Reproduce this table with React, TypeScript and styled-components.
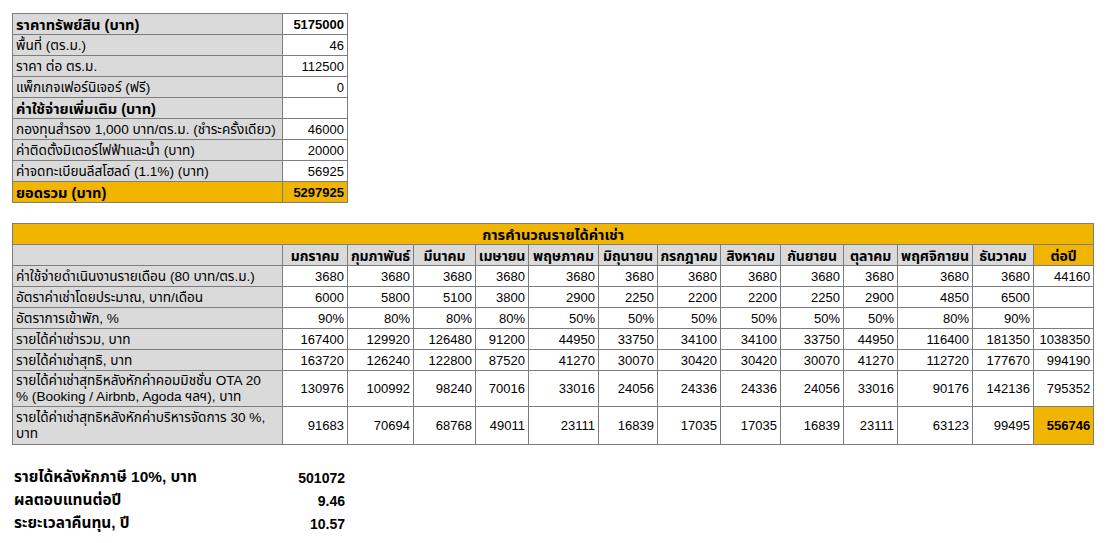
import React from "react";
import styled, { createGlobalStyle } from "styled-components";

const GlobalStyle = createGlobalStyle`
  html, body { margin: 0; padding: 0; background: #ffffff; }
  body {
    font-family: "Liberation Sans", Tahoma, "Noto Sans Thai", "Noto Sans", sans-serif;
    color: #000;
  }
`;

const GRAY = "#dadada";
const ORANGE = "#f1b500";
const LINE = "#7d7d7d";

const Page = styled.div`
  display: flex;
  flex-direction: column;
  padding: 13px 0 0 12px;
  width: 1109px;
  height: 543px;
  box-sizing: border-box;
`;

const Table = styled.table<{ $w: number }>`
  border-collapse: collapse;
  table-layout: fixed;
  width: ${(p) => p.$w}px;
  font-size: 13px;
  line-height: 16px;
`;

const Row = styled.tr<{ $h?: number }>`
  height: ${(p) => p.$h ?? 21}px;
`;

type Tone = "label" | "value" | "head" | "accent";

const Cell = styled.td<{
  $tone: Tone;
  $bold?: boolean;
  $align?: "left" | "right" | "center";
  $size?: number;
}>`
  border: 1px solid ${LINE};
  padding: 1px 3px 0 3px;
  box-sizing: border-box;
  white-space: nowrap;
  vertical-align: middle;
  font-size: ${(p) => p.$size ?? 13}px;
  font-weight: ${(p) => (p.$bold ? 700 : 400)};
  text-align: ${(p) => p.$align ?? (p.$tone === "label" ? "left" : "right")};
  background: ${(p) =>
    p.$tone === "label" || p.$tone === "head" ? GRAY : p.$tone === "accent" ? ORANGE : "#ffffff"};
`;

const HeadCell = styled(Cell)`
  padding: 1px 0 0 0;
  letter-spacing: -0.1px;
`;

const Spacer = styled.div<{ $h: number }>`
  height: ${(p) => p.$h}px;
  flex: none;
`;

const Summary = styled.div`
  display: grid;
  grid-template-columns: 1fr auto;
  grid-auto-rows: 23px;
  width: 331px;
  padding-left: 2px;
  font-weight: 700;
  align-items: center;
`;

const SumLabel = styled.span`
  font-size: 15.4px;
  white-space: nowrap;
`;

const SumValue = styled.span`
  font-size: 14px;
  text-align: right;
`;

const LABEL_SIZE = 13.6;
const BOLD_LABEL_SIZE = 14.6;
const MONTH_SIZE = 14;

const topRows: { label: string; value: string; bold?: boolean; accent?: boolean }[] = [
  { label: "ราคาทรัพย์สิน (บาท)", value: "5175000", bold: true },
  { label: "พื้นที่ (ตร.ม.)", value: "46" },
  { label: "ราคา ต่อ ตร.ม.", value: "112500" },
  { label: "แพ็กเกจเฟอร์นิเจอร์ (ฟรี)", value: "0" },
  { label: "ค่าใช้จ่ายเพิ่มเติม (บาท)", value: "", bold: true },
  { label: "กองทุนสำรอง 1,000 บาท/ตร.ม. (ชำระครั้งเดียว)", value: "46000" },
  { label: "ค่าติดตั้งมิเตอร์ไฟฟ้าและน้ำ (บาท)", value: "20000" },
  { label: "ค่าจดทะเบียนลีสโฮลด์ (1.1%) (บาท)", value: "56925" },
  { label: "ยอดรวม (บาท)", value: "5297925", bold: true, accent: true },
];

const months = [
  { name: "มกราคม", w: 65 },
  { name: "กุมภาพันธ์", w: 66 },
  { name: "มีนาคม", w: 62 },
  { name: "เมษายน", w: 53 },
  { name: "พฤษภาคม", w: 70 },
  { name: "มิถุนายน", w: 59 },
  { name: "กรกฎาคม", w: 63 },
  { name: "สิงหาคม", w: 60 },
  { name: "กันยายน", w: 63 },
  { name: "ตุลาคม", w: 54 },
  { name: "พฤศจิกายน", w: 75 },
  { name: "ธันวาคม", w: 61 },
];

const calcRows: { label: React.ReactNode; values: string[]; total: string; h?: number; accentTotal?: boolean }[] = [
  {
    label: "ค่าใช้จ่ายดำเนินงานรายเดือน (80 บาท/ตร.ม.)",
    values: ["3680", "3680", "3680", "3680", "3680", "3680", "3680", "3680", "3680", "3680", "3680", "3680"],
    total: "44160",
  },
  {
    label: "อัตราค่าเช่าโดยประมาณ, บาท/เดือน",
    values: ["6000", "5800", "5100", "3800", "2900", "2250", "2200", "2200", "2250", "2900", "4850", "6500"],
    total: "",
  },
  {
    label: "อัตราการเข้าพัก, %",
    values: ["90%", "80%", "80%", "80%", "50%", "50%", "50%", "50%", "50%", "50%", "80%", "90%"],
    total: "",
  },
  {
    label: "รายได้ค่าเช่ารวม, บาท",
    values: ["167400", "129920", "126480", "91200", "44950", "33750", "34100", "34100", "33750", "44950", "116400", "181350"],
    total: "1038350",
  },
  {
    label: "รายได้ค่าเช่าสุทธิ, บาท",
    values: ["163720", "126240", "122800", "87520", "41270", "30070", "30420", "30420", "30070", "41270", "112720", "177670"],
    total: "994190",
  },
  {
    label: (
      <>
        รายได้ค่าเช่าสุทธิหลังหักค่าคอมมิชชั่น OTA 20
        <br />% (Booking / Airbnb, Agoda ฯลฯ), บาท
      </>
    ),
    values: ["130976", "100992", "98240", "70016", "33016", "24056", "24336", "24336", "24056", "33016", "90176", "142136"],
    total: "795352",
    h: 36,
  },
  {
    label: (
      <>
        รายได้ค่าเช่าสุทธิหลังหักค่าบริหารจัดการ 30 %,
        <br />
        บาท
      </>
    ),
    values: ["91683", "70694", "68768", "49011", "23111", "16839", "17035", "17035", "16839", "23111", "63123", "99495"],
    total: "556746",
    h: 38,
    accentTotal: true,
  },
];

const summary = [
  { label: "รายได้หลังหักภาษี 10%, บาท", value: "501072" },
  { label: "ผลตอบแทนต่อปี", value: "9.46" },
  { label: "ระยะเวลาคืนทุน, ปี", value: "10.57" },
];

export default function App() {
  return (
    <>
      <GlobalStyle />
      <Page>
        <Table $w={335}>
          <colgroup>
            <col style={{ width: 270 }} />
            <col style={{ width: 65 }} />
          </colgroup>
          <tbody>
            {topRows.map((r, i) => (
              <Row key={i}>
                <Cell
                  $tone={r.accent ? "accent" : "label"}
                  $bold={r.bold}
                  $align="left"
                  $size={r.bold ? BOLD_LABEL_SIZE : LABEL_SIZE}
                >
                  {r.label}
                </Cell>
                <Cell $tone={r.accent ? "accent" : "value"} $bold={r.bold}>
                  {r.value}
                </Cell>
              </Row>
            ))}
          </tbody>
        </Table>
        <Spacer $h={20} />
        <Table $w={1081}>
          <colgroup>
            <col style={{ width: 270 }} />
            {months.map((m) => (
              <col key={m.name} style={{ width: m.w }} />
            ))}
            <col style={{ width: 60 }} />
          </colgroup>
          <tbody>
            <Row>
              <Cell $tone="accent" $bold $align="center" $size={BOLD_LABEL_SIZE} colSpan={14}>
                การคำนวณรายได้ค่าเช่า
              </Cell>
            </Row>
            <Row>
              <Cell $tone="head" />
              {months.map((m) => (
                <HeadCell key={m.name} $tone="head" $bold $align="center" $size={MONTH_SIZE}>
                  {m.name}
                </HeadCell>
              ))}
              <HeadCell $tone="accent" $bold $align="center" $size={MONTH_SIZE}>
                ต่อปี
              </HeadCell>
            </Row>
            {calcRows.map((r, i) => (
              <Row key={i} $h={r.h}>
                <Cell $tone="label" $size={LABEL_SIZE}>
                  {r.label}
                </Cell>
                {r.values.map((v, j) => (
                  <Cell key={j} $tone="value">
                    {v}
                  </Cell>
                ))}
                <Cell $tone={r.accentTotal ? "accent" : "value"} $bold={r.accentTotal}>
                  {r.total}
                </Cell>
              </Row>
            ))}
          </tbody>
        </Table>
        <Spacer $h={21} />
        <Summary>
          {summary.map((s) => (
            <React.Fragment key={s.label}>
              <SumLabel>{s.label}</SumLabel>
              <SumValue>{s.value}</SumValue>
            </React.Fragment>
          ))}
        </Summary>
      </Page>
    </>
  );
}
